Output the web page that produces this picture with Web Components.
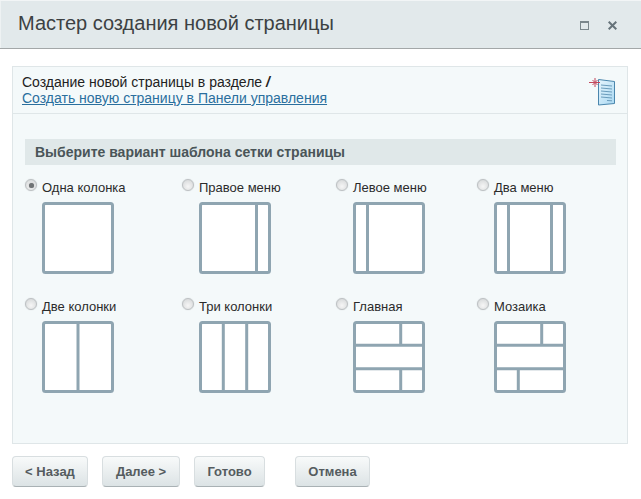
<!DOCTYPE html>
<html lang="ru">
<head>
<meta charset="utf-8">
<title>Мастер создания новой страницы</title>
<style>
    html, body { margin: 0; padding: 0; background: #fff; }
    body { width: 641px; height: 499px; overflow: hidden; font-family: "Liberation Sans", Arial, sans-serif; }
</style>
</head>
<body>
<wizard-dialog heading="Мастер создания новой страницы">
    <wizard-panel
        section="Создание новой страницы в разделе"
        path="/"
        link="Создать новую страницу в Панели управления"
        heading="Выберите вариант шаблона сетки страницы">
        <layout-option label="Одна колонка" layout="one" checked></layout-option>
        <layout-option label="Правое меню" layout="right"></layout-option>
        <layout-option label="Левое меню" layout="left"></layout-option>
        <layout-option label="Два меню" layout="both"></layout-option>
        <layout-option label="Две колонки" layout="two"></layout-option>
        <layout-option label="Три колонки" layout="three"></layout-option>
        <layout-option label="Главная" layout="main"></layout-option>
        <layout-option label="Мозаика" layout="mosaic"></layout-option>
    </wizard-panel>
    <wizard-button slot="buttons" style="width:76px">&lt; Назад</wizard-button>
    <wizard-button slot="buttons" style="width:78px">Далее &gt;</wizard-button>
    <wizard-button slot="buttons" style="width:71px">Готово</wizard-button>
    <wizard-button slot="buttons" style="width:75px" class="cancel">Отмена</wizard-button>
</wizard-dialog>

<script>
// ==================== WizardDialog ====================
class WizardDialog extends HTMLElement {
    connectedCallback() {
        this.attachShadow({ mode: 'open' });
        this.shadowRoot.innerHTML = `
            <style>
                :host { display: block; }
                .title-bar {
                    height: 48px;
                    display: flex;
                    justify-content: space-between;
                    padding: 0 24px 0 18px;
                    background: #e2e9eb;
                    box-shadow: inset 0 1px #f2f5f6, inset 1px 0 #eef2f3;
                    border-bottom: 1px solid #a3a7a8;
                }
                h1 {
                    margin: 12px 0 0;
                    font-size: 20px;
                    line-height: 23px;
                    font-weight: normal;
                    color: #3c4143;
                }
                .tools { display: flex; gap: 19px; padding-top: 21px; }
                svg { display: block; }
                .content { padding: 17px 13px 0 12px; }
                .buttons { display: flex; padding: 12px 0 0 12px; gap: 14px; }
                ::slotted(.cancel) { margin-left: 16px; }
            </style>
            <div class="title-bar">
                <h1>${this.getAttribute('heading')}</h1>
                <div class="tools">
                    <svg width="9" height="9" viewBox="0 0 9 9"><rect x=".5" y=".5" width="8" height="8" fill="none" stroke="#7b878c"/><path d="M0 1.5h9" stroke="#7b878c"/></svg>
                    <svg width="9" height="9" viewBox="0 0 9 9"><path d="M.7.7l7.6 7.6M8.3.7L.7 8.3" fill="none" stroke="#66737a" stroke-width="2"/></svg>
                </div>
            </div>
            <div class="content"><slot></slot></div>
            <div class="buttons"><slot name="buttons"></slot></div>
        `;
    }
}

// ==================== WizardPanel ====================
class WizardPanel extends HTMLElement {
    connectedCallback() {
        this.attachShadow({ mode: 'open' });
        this.shadowRoot.innerHTML = `
            <style>
                :host {
                    display: block;
                    height: 376px;
                    background: #f4f9fa;
                    border: 1px solid #dfe6e8;
                    font-size: 13px;
                    color: #222;
                }
                .head {
                    height: 47px;
                    box-sizing: border-box;
                    display: flex;
                    justify-content: space-between;
                    padding: 7px 12px 0 9px;
                    border-bottom: 1px solid #dfe6e8;
                    line-height: 16px;
                    font-size: 14px;
                }
                a { color: #2a6f9e; text-decoration: underline; display: block; }
                .path { font-weight: bold; font-style: italic; }
                .body { padding: 25px 11px 0 12px; }
                h2 {
                    margin: 0 0 14px;
                    height: 26px;
                    line-height: 26px;
                    padding-left: 10px;
                    background: #e0e8e9;
                    font-size: 14px;
                    font-weight: bold;
                    color: #4a5558;
                }
                .grid {
                    display: grid;
                    grid-template-columns: 157px 154px 141px 1fr;
                    grid-auto-rows: 119px;
                }
                svg { display: block; margin-top: 4px; }
            </style>
            <div class="head">
                <div>${this.getAttribute('section')} <span class="path">${this.getAttribute('path')}</span>
                    <a href="#">${this.getAttribute('link')}</a>
                </div>
                <svg width="26" height="28" viewBox="0 0 26 28">
                    <defs><linearGradient id="doc" x1="0" y1="0" x2="1" y2="1"><stop offset="0" stop-color="#e6f5fd"/><stop offset="1" stop-color="#a9d8f2"/></linearGradient></defs>
                    <path d="M9.5 1.5L25.5 3.5v22L9.5 27z" fill="url(#doc)" stroke="#4a86ad"/>
                    <path d="M12 7l11 1M12 10l11 1M12 13l11 1M12 16l11 1M12 19l11 1M18 22.5l5 .3" stroke="#6a9cbc" fill="none"/>
                    <path d="M0 4.5h11M6 0v9M3.5 2l5 5M8.5 2l-5 5" stroke="#c2475c" fill="none"/>
                </svg>
            </div>
            <div class="body">
                <h2>${this.getAttribute('heading')}</h2>
                <div class="grid"><slot></slot></div>
            </div>
        `;
    }
}

// ==================== LayoutOption ====================
const LAYOUTS = {
    one: '',
    right: 'M57.5 0V72',
    left: 'M14.5 0V72',
    both: 'M14.5 0V72M57.5 0V72',
    two: 'M36 0V72',
    three: 'M24.3 0V72M47.7 0V72',
    main: 'M0 24.3H72M0 47.7H72M47.7 0V24M47.7 48V72',
    mosaic: 'M0 24.3H72M0 47.7H72M47.7 0V24M24.3 48V72'
};

class LayoutOption extends HTMLElement {
    connectedCallback() {
        this.attachShadow({ mode: 'open' });
        const on = this.hasAttribute('checked');
        this.shadowRoot.innerHTML = `
            <style>
                :host { display: block; }
                .row { display: flex; align-items: center; gap: 5px; height: 14px; font-size: 13px; color: #2b2b2b; }
                .label { margin-top: 2px; }
                .radio {
                    width: 12px;
                    height: 12px;
                    margin-top: -2px;
                    box-sizing: border-box;
                    border-radius: 50%;
                    border: 1px solid #bcc0c2;
                    box-shadow: 0 0 1px #b9bec0;
                    background: radial-gradient(circle at 50% 65%, #f6f6f6, #d2d5d6);
                    display: flex;
                    align-items: center;
                    justify-content: center;
                }
                .radio i { width: 5px; height: 5px; border-radius: 50%; background: #6f7375; box-shadow: 0 0 1px #8a8e90; }
                svg { display: block; margin: 9px 0 0 17px; }
            </style>
            <div class="row">
                <span class="radio">${on ? '<i></i>' : ''}</span>
                <span class="label">${this.getAttribute('label')}</span>
            </div>
            <svg width="72" height="72" viewBox="0 0 72 72">
                <rect x="1.5" y="1.5" width="69" height="69" rx="2" fill="#fff"/>
                <path d="${LAYOUTS[this.getAttribute('layout')]}" stroke="#8fa5b1" stroke-width="3" fill="none"/>
                <rect x="1.5" y="1.5" width="69" height="69" rx="2" fill="none" stroke="#8fa5b1" stroke-width="3"/>
            </svg>
        `;
    }
}

// ==================== WizardButton ====================
class WizardButton extends HTMLElement {
    connectedCallback() {
        this.attachShadow({ mode: 'open' });
        this.shadowRoot.innerHTML = `
            <style>
                :host { display: block; }
                button {
                    width: 100%;
                    height: 31px;
                    padding: 0;
                    border: 1px solid #d8dee0;
                    border-bottom-color: #a9b1b4;
                    border-radius: 4px;
                    background: linear-gradient(#f8fafa, #dce3e5);
                    font: bold 13px "Liberation Sans", Arial, sans-serif;
                    color: #555c5f;
                    cursor: pointer;
                }
            </style>
            <button type="button"><slot></slot></button>
        `;
    }
}

customElements.define('wizard-dialog', WizardDialog);
customElements.define('wizard-panel', WizardPanel);
customElements.define('layout-option', LayoutOption);
customElements.define('wizard-button', WizardButton);
</script>
</body>
</html>
